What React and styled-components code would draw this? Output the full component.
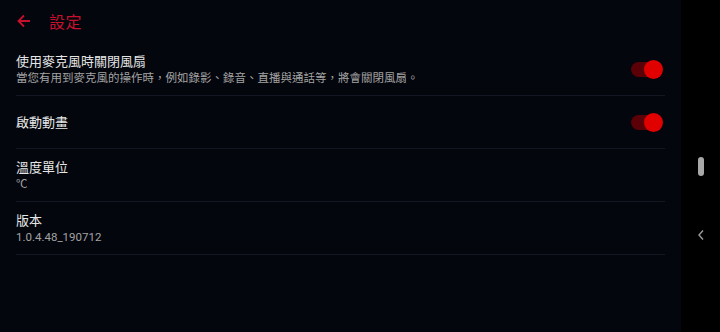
import styled, { createGlobalStyle } from "styled-components";

const GlobalStyle = createGlobalStyle`
  html, body {
    margin: 0;
    padding: 0;
    background: #000;
  }
  body {
    font-family: "Noto Sans CJK TC", "Noto Sans", Roboto, sans-serif;
  }
`;

const settings = [
  {
    title: "使用麥克風時關閉風扇",
    desc: "當您有用到麥克風的操作時，例如錄影、錄音、直播與通話等，將會關閉風扇。",
    toggle: true,
  },
  { title: "啟動動畫", toggle: true },
  { title: "溫度單位", desc: "℃" },
  { title: "版本", desc: "1.0.4.48_190712" },
];

const App = () => {
  return (
    <Screen>
      <GlobalStyle />
      <Main>
        <Header>
          <BackButton>
            <svg width="16" height="16" viewBox="0 0 16 16">
              <path
                d="M14 8H2.5M8 2.5L2.5 8L8 13.5"
                fill="none"
                stroke="#c8102e"
                strokeWidth="1.8"
              />
            </svg>
          </BackButton>
          <Title>設定</Title>
        </Header>
        <List>
          {settings.map((item) => (
            <Row key={item.title}>
              <Texts>
                <RowTitle>{item.title}</RowTitle>
                {item.desc && <RowDesc>{item.desc}</RowDesc>}
              </Texts>
              {item.toggle && (
                <Toggle>
                  <Knob />
                </Toggle>
              )}
            </Row>
          ))}
        </List>
      </Main>
      <NavBar>
        <Pill />
        <Chevron>
          <svg width="8" height="12" viewBox="0 0 8 12">
            <path d="M6 1.5L2 6l4 4.5" fill="none" stroke="#9a9a9a" strokeWidth="1.4" />
          </svg>
        </Chevron>
      </NavBar>
    </Screen>
  );
};

export default App;

const Screen = styled.div`
  display: flex;
  width: 720px;
  height: 332px;
  overflow: hidden;
`;

const Main = styled.div`
  flex: 1;
  background: #03060d;
  padding: 0 16px 0 16px;
`;

const Header = styled.div`
  display: flex;
  align-items: center;
  height: 43px;
  padding-bottom: 2px;
  box-sizing: border-box;
`;

const BackButton = styled.div`
  display: flex;
  width: 33px;
  align-items: center;
`;

const Title = styled.div`
  color: #c8102e;
  font-size: 16px;
  letter-spacing: 0.5px;
`;

const List = styled.div`
  display: flex;
  flex-direction: column;
`;

const Row = styled.div`
  display: flex;
  align-items: center;
  justify-content: space-between;
  height: 53px;
  box-sizing: border-box;
  border-bottom: 1px solid #121722;
`;

const Texts = styled.div`
  display: flex;
  flex-direction: column;
  gap: 1px;
`;

const RowTitle = styled.div`
  color: #e6e6e6;
  font-size: 13px;
  line-height: 18px;
`;

const RowDesc = styled.div`
  color: #a3a3a3;
  font-size: 11.5px;
  line-height: 15px;
  font-family: Roboto, "Noto Sans CJK TC", sans-serif;
`;

const Toggle = styled.div`
  position: relative;
  width: 28px;
  height: 15px;
  border-radius: 8px;
  background: #5c0008;
  margin-right: 6px;
`;

const Knob = styled.div`
  position: absolute;
  right: -4px;
  top: -2px;
  width: 19px;
  height: 19px;
  border-radius: 50%;
  background: #e00000;
`;

const NavBar = styled.div`
  width: 39px;
  background: #000;
  display: flex;
  flex-direction: column;
  align-items: center;
  padding-top: 157px;
  box-sizing: border-box;
`;

const Pill = styled.div`
  width: 6px;
  height: 19px;
  border-radius: 3px;
  background: #a8a8a8;
`;

const Chevron = styled.div`
  display: flex;
  margin-top: 53px;
`;
